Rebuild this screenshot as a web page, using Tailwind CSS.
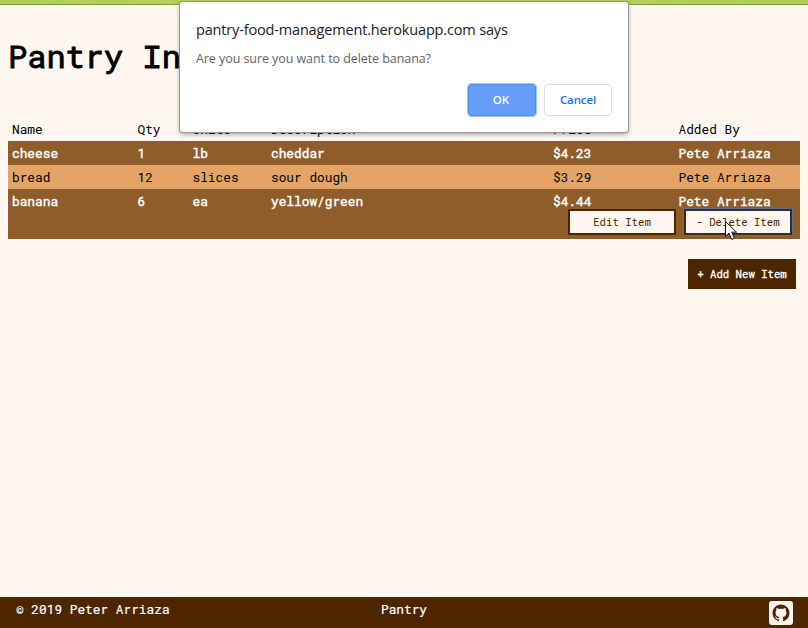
<!DOCTYPE html>
<html lang="en">
<head>
<meta charset="utf-8">
<title>Pantry</title>
<script src="https://cdn.jsdelivr.net/npm/@tailwindcss/browser@4"></script>
</head>
<body class="relative flex h-[628px] w-[808px] flex-col overflow-hidden bg-[#fff7f0] font-['Roboto_Mono','DejaVu_Sans_Mono',monospace] text-[12.8px] text-black">
  <header class="h-[5px] shrink-0 overflow-hidden border-b border-[#7c9e35] bg-[#b0cf5a]">
    <svg class="block" width="808" height="4" fill="none" stroke="#bdd774" stroke-width="1"><path d="M40 3l3-3M48 0h5M68 4l4-4M73 4l4-4M80 0v4M84 0v4M88 2h6M134 4l4-4M140 4l4-4M146 4l4-4M152 4l4-4M160 2h12M260 4l4-4M300 2h14M400 4l4-4M500 2h18M640 4l4-4M646 4l4-4M680 0v4M740 4l4-4"/></svg>
  </header>
  <main class="flex grow flex-col px-2">
    <h1 class="mt-[30px] h-[86px] text-[32px] leading-[42px] [-webkit-text-stroke:0.9px_black]">Pantry In</h1>
    <section class="leading-6">
      <div class="grid h-5 grid-cols-[125.5px_55px_78.5px_282px_125.5px_1fr] pl-1 leading-[17px]">
        <span>Name</span><span>Qty</span><span>Units</span><span>Description</span><span>Price</span><span>Added By</span>
      </div>
      <div class="grid h-6 grid-cols-[125.5px_55px_78.5px_282px_125.5px_1fr] bg-[#8e5d2a] pl-1 text-white [-webkit-text-stroke:0.4px_white]">
        <span>cheese</span><span>1</span><span>lb</span><span>cheddar</span><span>$4.23</span><span>Pete Arriaza</span>
      </div>
      <div class="grid h-6 grid-cols-[125.5px_55px_78.5px_282px_125.5px_1fr] bg-[#e3a466] pl-1">
        <span>bread</span><span>12</span><span>slices</span><span>sour dough</span><span>$3.29</span><span>Pete Arriaza</span>
      </div>
      <div class="h-[50px] bg-[#8e5d2a]">
        <div class="grid h-5 grid-cols-[125.5px_55px_78.5px_282px_125.5px_1fr] pl-1 text-white [-webkit-text-stroke:0.4px_white]">
          <span>banana</span><span>6</span><span>ea</span><span>yellow/green</span><span>$4.44</span><span>Pete Arriaza</span>
        </div>
        <div class="flex justify-end gap-2 pr-2 text-[10.67px] text-[#4d2600]">
          <button class="h-[26px] w-[108px] border-2 border-[#4d2600] bg-[#fff7f0] leading-[22px]">Edit Item</button>
          <button class="relative h-[26px] w-[108px] border-2 border-[#3d2a24] bg-[#fff7f0] leading-[22px] shadow-[0_0_0_1px_#5b6f9e]">- Delete Item
            <svg class="absolute left-[38px] top-[9px]" width="14" height="21" viewBox="0 0 14 21"><path d="M1.5 1.5v15l3.5-3.3 2.8 6.3 2.7-1.2-2.8-6.1h4.8z" fill="#fff" stroke="#111"/></svg>
          </button>
        </div>
      </div>
    </section>
    <button class="mt-5 mr-1 h-[30px] w-[108px] self-end bg-[#4d2600] text-[10.67px] text-white [-webkit-text-stroke:0.3px_white]">+ Add New Item</button>
  </main>
  <footer class="grid h-[31px] shrink-0 grid-cols-3 bg-[#4d2600] px-2 leading-[25px] text-white [-webkit-text-stroke:0.2px_white]">
    <span class="pl-2">© 2019 Peter Arriaza</span>
    <span class="text-center">Pantry</span>
    <svg class="mt-1 mr-[7px] justify-self-end" width="24" height="24" viewBox="0 0 24 24"><rect width="24" height="24" rx="3" fill="#fff7f0"/><path transform="translate(3.5 3.6) scale(1.06)" fill="#4d2600" d="M8 0C3.58 0 0 3.58 0 8c0 3.54 2.29 6.53 5.47 7.59.4.07.55-.17.55-.38v-1.49c-2.23.48-2.69-.95-2.69-.95-.36-.92-.89-1.17-.89-1.17-.73-.5.05-.49.05-.49.81.06 1.23.83 1.23.83.72 1.23 1.88.87 2.34.67.07-.52.28-.88.51-1.08-1.78-.2-3.65-.89-3.65-3.95 0-.87.31-1.59.82-2.15-.08-.2-.36-1.01.08-2.12 0 0 .67-.21 2.2.82A7.66 7.66 0 0 1 8 3.86c.68 0 1.36.09 2 .27 1.53-1.04 2.2-.82 2.2-.82.44 1.11.16 1.92.08 2.12.51.56.82 1.27.82 2.15 0 3.07-1.87 3.75-3.65 3.95.29.25.54.73.54 1.48v2.2c0 .21.15.46.55.38A8 8 0 0 0 16 8c0-4.42-3.58-8-8-8z"/></svg>
  </footer>
  <div role="dialog" class="absolute left-[180px] top-[2px] h-[130px] w-[448px] rounded-[3px] bg-white px-4 pt-[17px] font-['Open_Sans','Noto_Sans',sans-serif] shadow-[0_0_0_1px_#9b9995,0_2px_5px_rgba(0,0,0,0.4)]">
    <h2 class="h-[29px] whitespace-nowrap text-[14.5px] leading-[22px] tracking-[-0.165px] text-[#202124]">pantry-food-management.herokuapp.com says</h2>
    <p class="h-9 whitespace-nowrap text-[12.5px] leading-[21px] tracking-[-0.07px] text-[#5f6368]">Are you sure you want to delete banana?</p>
    <div class="flex items-center justify-end gap-2 text-xs font-semibold">
      <button class="h-8 w-[68px] rounded-[3px] border border-[#508bf0] bg-[#669df6] pr-[2px] text-[11.5px] text-white outline-1 outline-[#a8c7fa]">OK</button>
      <button class="h-8 w-[68px] rounded-[4px] border border-[#dadce0] bg-white text-[11.5px] tracking-[-0.1px] text-[#1a73e8]">Cancel</button>
    </div>
  </div>
</body>
</html>
